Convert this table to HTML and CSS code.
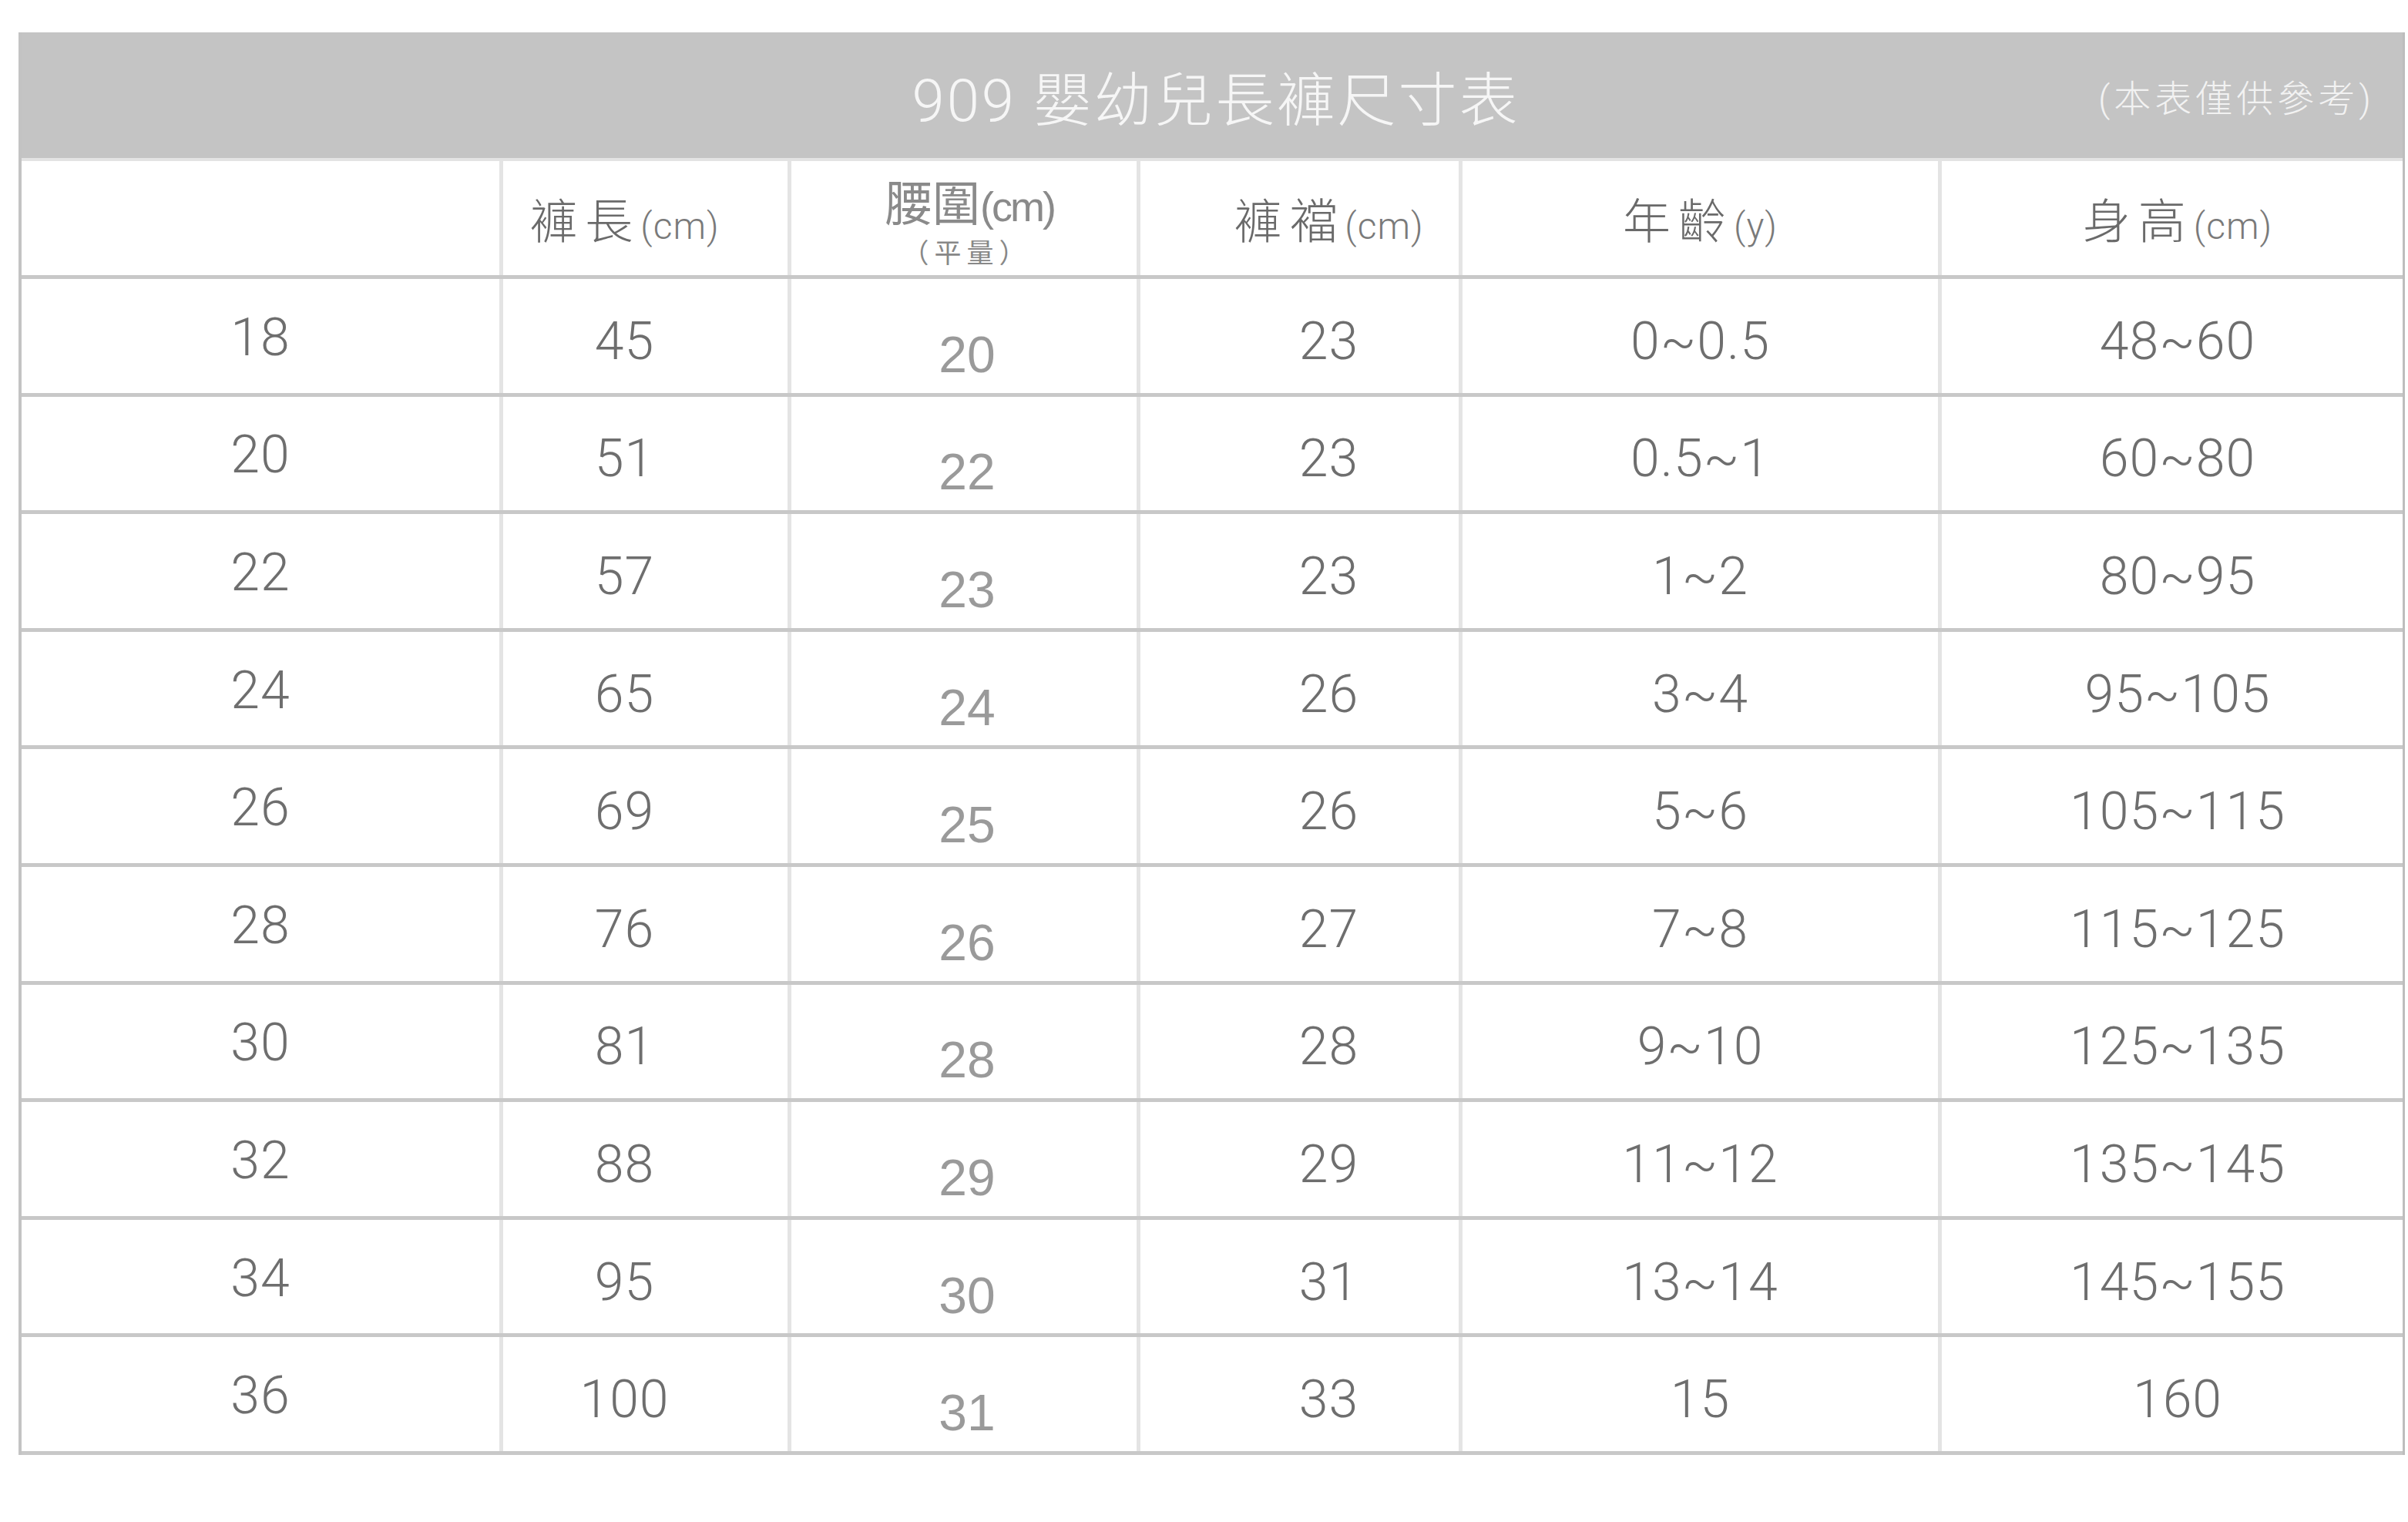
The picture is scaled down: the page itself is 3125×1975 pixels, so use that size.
FILE: index.html
```html
<!DOCTYPE html>
<html lang="zh-Hant">
<head>
<meta charset="utf-8">
<title>909 嬰幼兒長褲尺寸表</title>
<link rel="stylesheet" href="styles.css">
</head>
<body>
<div class="sheet">
  <div class="titlebar">
    <div class="spacer"></div>
    <div class="title">909 嬰幼兒長褲尺寸表</div>
    <div class="note">(本表僅供參考)</div>
  </div>
  <div class="row head">
    <div class="cell c1"></div>
    <div class="cell c2"><span class="hlabel"><span class="zh">褲長</span><span class="unit">(cm)</span></span></div>
    <div class="cell c3 stack">
      <div class="line1"><span class="zh-w">腰圍</span><span class="unit-w">(cm)</span></div>
      <div class="line2">（平量）</div>
    </div>
    <div class="cell c4"><span class="hlabel"><span class="zh">褲襠</span><span class="unit">(cm)</span></span></div>
    <div class="cell c5"><span class="hlabel"><span class="zh">年齡</span><span class="unit">(y)</span></span></div>
    <div class="cell c6"><span class="hlabel"><span class="zh">身高</span><span class="unit">(cm)</span></span></div>
  </div>
  <div class="row data"><div class="cell c1">18</div><div class="cell c2">45</div><div class="cell c3 waist">20</div><div class="cell c4">23</div><div class="cell c5">0~0.5</div><div class="cell c6">48~60</div></div>
  <div class="row data"><div class="cell c1">20</div><div class="cell c2">51</div><div class="cell c3 waist">22</div><div class="cell c4">23</div><div class="cell c5">0.5~1</div><div class="cell c6">60~80</div></div>
  <div class="row data"><div class="cell c1">22</div><div class="cell c2">57</div><div class="cell c3 waist">23</div><div class="cell c4">23</div><div class="cell c5">1~2</div><div class="cell c6">80~95</div></div>
  <div class="row data"><div class="cell c1">24</div><div class="cell c2">65</div><div class="cell c3 waist">24</div><div class="cell c4">26</div><div class="cell c5">3~4</div><div class="cell c6">95~105</div></div>
  <div class="row data"><div class="cell c1">26</div><div class="cell c2">69</div><div class="cell c3 waist">25</div><div class="cell c4">26</div><div class="cell c5">5~6</div><div class="cell c6">105~115</div></div>
  <div class="row data"><div class="cell c1">28</div><div class="cell c2">76</div><div class="cell c3 waist">26</div><div class="cell c4">27</div><div class="cell c5">7~8</div><div class="cell c6">115~125</div></div>
  <div class="row data"><div class="cell c1">30</div><div class="cell c2">81</div><div class="cell c3 waist">28</div><div class="cell c4">28</div><div class="cell c5">9~10</div><div class="cell c6">125~135</div></div>
  <div class="row data"><div class="cell c1">32</div><div class="cell c2">88</div><div class="cell c3 waist">29</div><div class="cell c4">29</div><div class="cell c5">11~12</div><div class="cell c6">135~145</div></div>
  <div class="row data"><div class="cell c1">34</div><div class="cell c2">95</div><div class="cell c3 waist">30</div><div class="cell c4">31</div><div class="cell c5">13~14</div><div class="cell c6">145~155</div></div>
  <div class="row data"><div class="cell c1">36</div><div class="cell c2">100</div><div class="cell c3 waist">31</div><div class="cell c4">33</div><div class="cell c5">15</div><div class="cell c6">160</div></div>
</div>
</body>
</html>
```
FILE: styles.css
```css
html, body {
  margin: 0;
  padding: 0;
  background: #ffffff;
}

body {
  font-family: Roboto, "Noto Sans CJK TC", "Noto Sans CJK SC", sans-serif;
}

.sheet {
  margin: 42px 0 0 24px;
  width: 3097px;
  box-sizing: border-box;
  border-left: 4px solid #c3c3c3;
  border-right: 3px solid #bdbdbd;
}

.titlebar {
  height: 163px;
  background: #c4c4c4;
  display: grid;
  grid-template-columns: 1fr auto 1fr;
  align-items: center;
}

.title {
  font-weight: 300;
  font-size: 76px;
  letter-spacing: 3px;
  color: #f6f6f6;
  white-space: nowrap;
  padding-left: 10px;
}

.note {
  justify-self: end;
  padding-right: 36px;
  font-weight: 300;
  font-size: 48px;
  letter-spacing: 5px;
  color: #f2f2f2;
  white-space: nowrap;
}

.row {
  display: grid;
  grid-template-columns: 620px 374px 453px 418px 622px 603px;
  box-sizing: border-box;
  border-bottom: 5px solid #c8c8c8;
}

.row.head {
  height: 157px;
  border-top: 4px solid #e3e3e3;
}

.row.data {
  height: 152.6px;
}

.cell {
  display: flex;
  align-items: center;
  justify-content: center;
  box-sizing: border-box;
  border-left: 5px solid #e4e4e4;
}

.cell.c1 {
  border-left: none;
}

.cell.c2 {
  padding-right: 54px;
}

.cell.c4 {
  padding-left: 76px;
}

.cell.c6 {
  padding-left: 14px;
}

.head .cell {
  color: #6a6a6a;
  padding-top: 4px;
}

.hlabel {
  white-space: nowrap;
}

.zh {
  font-family: "Noto Sans CJK TC", "Noto Sans CJK SC", sans-serif;
  font-weight: 300;
  font-size: 62px;
  letter-spacing: 10px;
  line-height: 1.1;
}

.unit {
  font-family: Roboto, "Liberation Sans", sans-serif;
  font-weight: 300;
  font-size: 48px;
  letter-spacing: 1px;
  color: #7a7a7a;
}

.head .cell.stack {
  flex-direction: column;
  padding-top: 10px;
}

.line1 {
  line-height: 1;
  white-space: nowrap;
  color: #8a8a8a;
  margin-left: 14px;
}

.zh-w {
  font-family: "Noto Sans CJK TC", "Noto Sans CJK SC", sans-serif;
  font-weight: 400;
  font-size: 62px;
}

.unit-w {
  font-family: "Liberation Sans", Arial, sans-serif;
  font-weight: 400;
  font-size: 54px;
  letter-spacing: -3px;
}

.line2 {
  font-family: "Noto Sans CJK TC", "Noto Sans CJK SC", sans-serif;
  font-weight: 400;
  font-size: 35px;
  letter-spacing: 7px;
  padding-left: 7px;
  line-height: 1.2;
  margin-top: 10px;
  color: #888888;
  white-space: nowrap;
  text-spacing-trim: space-all;
}

.data .cell {
  font-family: Roboto, "Liberation Sans", sans-serif;
  font-weight: 300;
  font-size: 68px;
  color: #6e6e6e;
  padding-top: 14px;
  letter-spacing: 1px;
}

.data .cell.c1 {
  padding-top: 4px;
}

.data .cell.waist {
  font-family: "Liberation Sans", Arial, sans-serif;
  font-weight: 400;
  font-size: 66px;
  color: #9a9a9a;
  letter-spacing: 0;
  padding-top: 48px;
  padding-left: 8px;
}
```
